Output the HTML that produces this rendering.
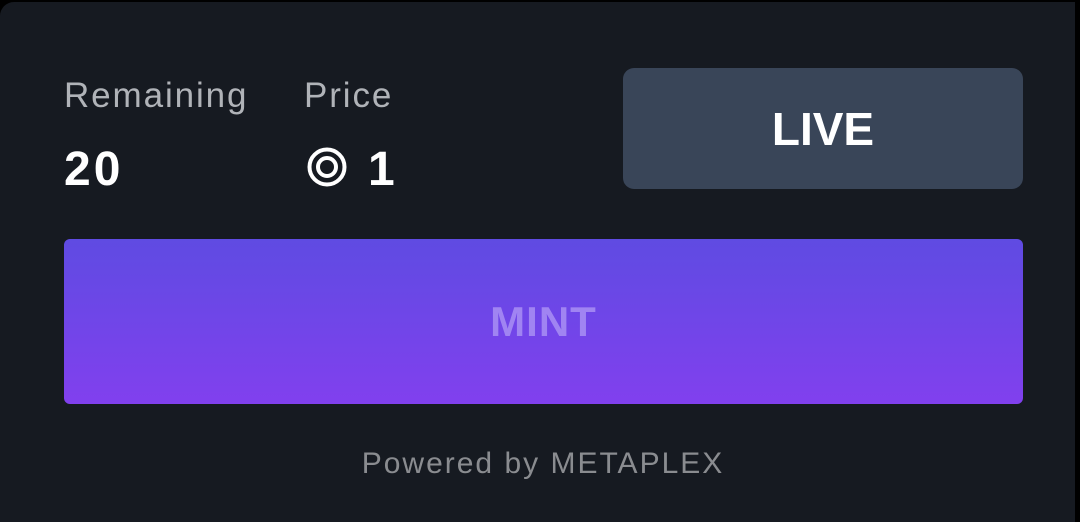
<!DOCTYPE html>
<html><head><style>
body{margin:0;width:1080px;height:511px;background:#000;overflow:hidden;font-family:"Liberation Sans",sans-serif}
.card{position:absolute;left:0;top:2px;width:1075px;height:520px;background:#161a21;border-top-left-radius:14px}
.lbl{position:absolute;top:74px;color:#b0b3b8;font-size:35px;letter-spacing:1.9px}
.val{position:absolute;top:140px;color:#fff;font-size:48px;font-weight:bold;letter-spacing:3px}
.live{position:absolute;left:623px;top:66px;width:400px;height:121px;background:#394558;border-radius:11px;color:#fff;font-weight:bold;font-size:46px;display:flex;align-items:center;justify-content:center}
.mint{position:absolute;left:64px;top:237px;width:959px;height:165px;border-radius:6px;background:linear-gradient(#5f4be2,#8140ee);color:#a084f2;font-weight:bold;font-size:42px;display:flex;align-items:center;justify-content:center;letter-spacing:1px}
.pw{position:absolute;left:0;width:1086px;top:445px;text-align:center;color:#8a8c90;font-size:30px;letter-spacing:2px}
</style></head><body><div class="card">
<div class="lbl" style="left:64px">Remaining</div>
<div class="lbl" style="left:304px">Price</div>
<div class="val" style="left:64px">20</div>
<svg style="position:absolute;left:306px;top:144px" width="42" height="42" viewBox="0 0 42 42"><circle cx="21" cy="21" r="17.5" fill="none" stroke="#fff" stroke-width="4"/><circle cx="21" cy="21" r="9" fill="none" stroke="#fff" stroke-width="4"/></svg>
<div class="val" style="left:368px">1</div>
<div class="live">LIVE</div>
<div class="mint">MINT</div>
<div class="pw">Powered by METAPLEX</div>
</div></body></html>
